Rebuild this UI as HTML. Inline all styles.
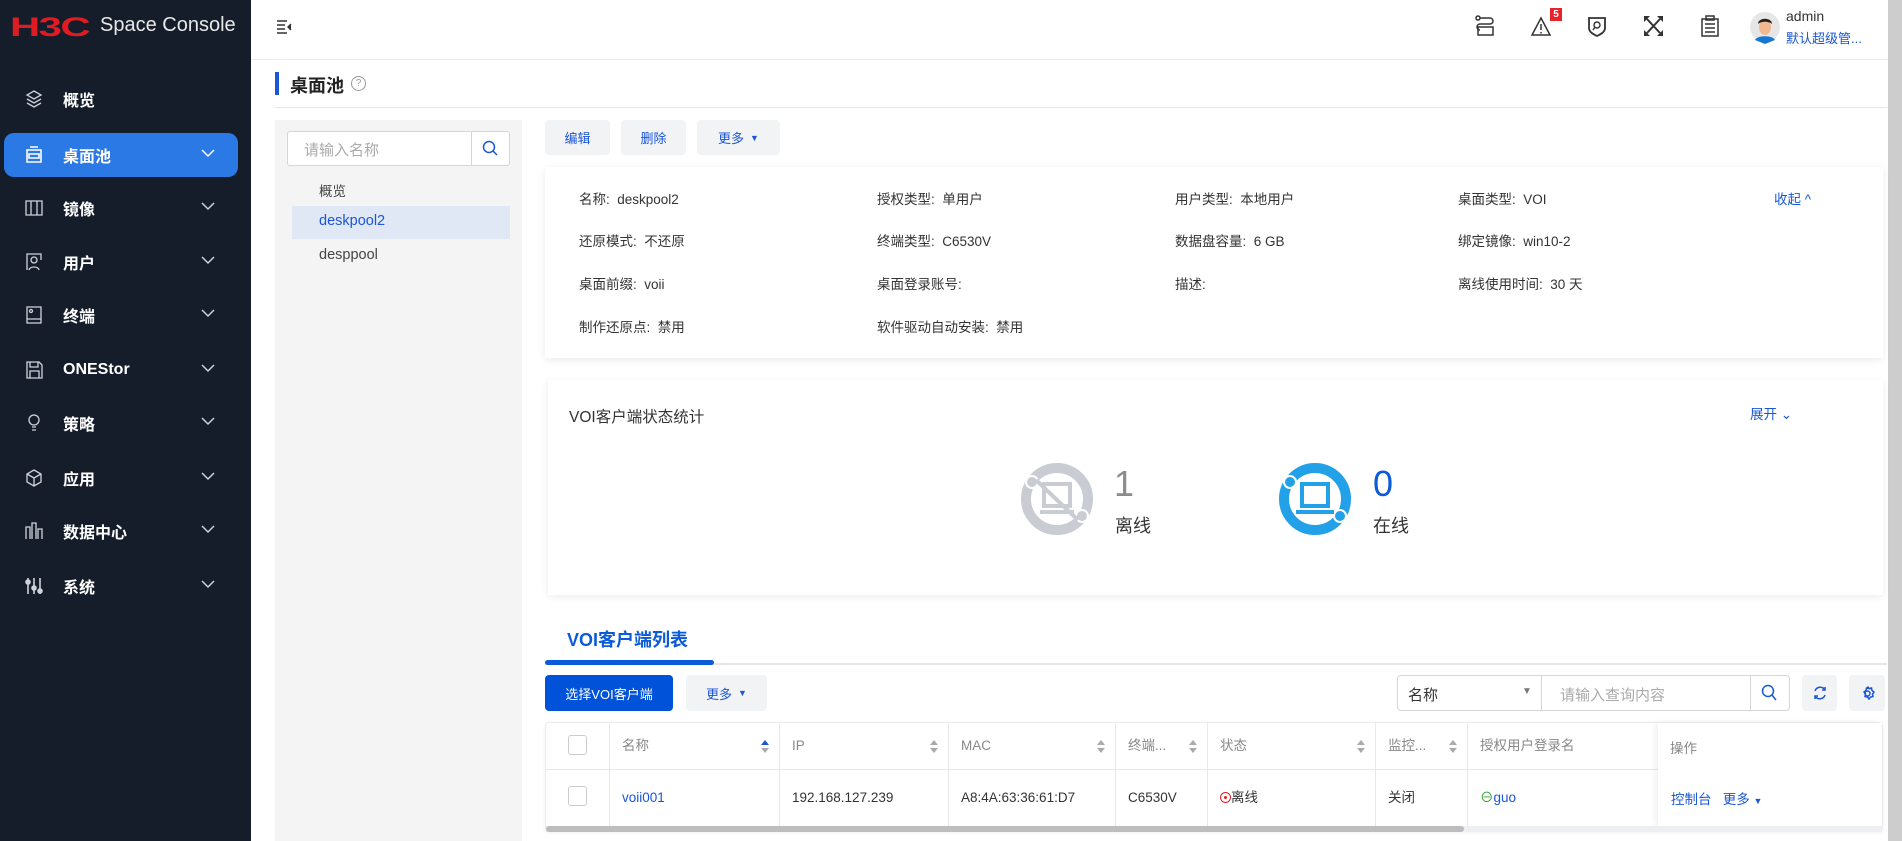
<!DOCTYPE html>
<html><head><meta charset="utf-8"><style>
*{margin:0;padding:0;box-sizing:border-box}
body{width:1902px;height:841px;overflow:hidden;background:#fff;font-family:"Liberation Sans","Noto Sans CJK SC",sans-serif;color:#333;position:relative;font-size:14px}
.a{position:absolute}
#side{left:0;top:0;width:251px;height:841px;background:#151d2b}
.mi{position:absolute;left:4px;width:234px;height:44px;color:#fff;font-size:16px;font-weight:bold;display:flex;align-items:center}
.mi .ic{position:absolute;left:20px;top:12px;width:20px;height:20px}
.mi .t{position:absolute;left:59px}
.mi .ch{position:absolute;left:197px;top:15px;width:14px;height:10px}
.mi.act{background:#2a79e4;border-radius:10px}
.btn{position:absolute;background:#f2f3f5;color:#1a56d6;border-radius:4px;font-size:13px;display:flex;align-items:center;justify-content:center}
.card{position:absolute;background:#fff;box-shadow:0 2px 8px rgba(0,0,0,.08)}
.lbl{position:absolute;font-size:13.5px;color:#333;white-space:nowrap;transform:translateY(-50%)}
.th{position:absolute;top:722px;height:48px;line-height:48px;color:#888;font-size:13.5px;padding-left:12px;border-right:1px solid #e8e8e8}
.td{position:absolute;top:770px;height:56px;line-height:56px;font-size:13.5px;color:#333;padding-left:12px;border-right:1px solid #e8e8e8}
.sort{position:absolute;right:10px;top:18px;width:8px;height:13px}
</style></head><body>
<div id="side" class="a">
  <div class="a" style="left:10px;top:12px;font-size:27px;font-weight:900;color:#e01b22;letter-spacing:-1px;font-family:'Liberation Sans',sans-serif;transform:scaleX(1.55);transform-origin:left">H3C</div>
  <div class="a" style="left:100px;top:14px;font-size:20px;color:#e8e8e8">Space Console</div>
  <div class="mi" style="top:77px"><svg class="ic" viewBox="0 0 20 20" fill="none" stroke="#cfd3da" stroke-width="1.3"><path d="M10 2 17 6 10 10 3 6Z"/><path d="M3 10l7 4 7-4M3 14l7 4 7-4"/></svg><span class="t">概览</span></div>
  <div class="mi act" style="top:133px"><svg class="ic" viewBox="0 0 20 20" fill="none" stroke="#fff" stroke-width="1.6"><path d="M6 2h8M3 5h14v12H3z"/><path d="M5 9h10v4H5z"/></svg><span class="t">桌面池</span><svg class="ch" viewBox="0 0 14 10" fill="none" stroke="#fff" stroke-width="1.5"><path d="M1 2l6 6 6-6"/></svg></div>
  <div class="mi" style="top:186px"><svg class="ic" viewBox="0 0 20 20" fill="none" stroke="#cfd3da" stroke-width="1.3"><path d="M2 3h16v14H2zM7 3v14M13 3v14"/></svg><span class="t">镜像</span><svg class="ch" viewBox="0 0 14 10" fill="none" stroke="#cfd3da" stroke-width="1.5"><path d="M1 2l6 6 6-6"/></svg></div>
  <div class="mi" style="top:240px"><svg class="ic" viewBox="0 0 20 20" fill="none" stroke="#cfd3da" stroke-width="1.3"><path d="M3 18V2h14v6"/><circle cx="10" cy="8" r="3"/><path d="M5 18c1-4 9-4 10 0"/></svg><span class="t">用户</span><svg class="ch" viewBox="0 0 14 10" fill="none" stroke="#cfd3da" stroke-width="1.5"><path d="M1 2l6 6 6-6"/></svg></div>
  <div class="mi" style="top:293px"><svg class="ic" viewBox="0 0 20 20" fill="none" stroke="#cfd3da" stroke-width="1.3"><path d="M3 2h14v16H3zM3 14h14"/><circle cx="7" cy="6" r="1.5"/></svg><span class="t">终端</span><svg class="ch" viewBox="0 0 14 10" fill="none" stroke="#cfd3da" stroke-width="1.5"><path d="M1 2l6 6 6-6"/></svg></div>
  <div class="mi" style="top:348px"><svg class="ic" viewBox="0 0 20 20" fill="none" stroke="#cfd3da" stroke-width="1.3"><path d="M3 2h12l3 3v13H3zM6 2v5h8V2M6 11h9v7H6z"/></svg><span class="t">ONEStor</span><svg class="ch" viewBox="0 0 14 10" fill="none" stroke="#cfd3da" stroke-width="1.5"><path d="M1 2l6 6 6-6"/></svg></div>
  <div class="mi" style="top:401px"><svg class="ic" viewBox="0 0 20 20" fill="none" stroke="#cfd3da" stroke-width="1.3"><circle cx="10" cy="7" r="5"/><path d="M8 14h4M8 17h4"/></svg><span class="t">策略</span><svg class="ch" viewBox="0 0 14 10" fill="none" stroke="#cfd3da" stroke-width="1.5"><path d="M1 2l6 6 6-6"/></svg></div>
  <div class="mi" style="top:456px"><svg class="ic" viewBox="0 0 20 20" fill="none" stroke="#cfd3da" stroke-width="1.3"><path d="M10 2l7 4v8l-7 4-7-4V6zM3 6l7 4 7-4M10 10v8"/></svg><span class="t">应用</span><svg class="ch" viewBox="0 0 14 10" fill="none" stroke="#cfd3da" stroke-width="1.5"><path d="M1 2l6 6 6-6"/></svg></div>
  <div class="mi" style="top:509px"><svg class="ic" viewBox="0 0 20 20" fill="none" stroke="#cfd3da" stroke-width="1.3"><path d="M2 18V6h4v12M8 18V2h4v16M14 18V8h4v10"/></svg><span class="t">数据中心</span><svg class="ch" viewBox="0 0 14 10" fill="none" stroke="#cfd3da" stroke-width="1.5"><path d="M1 2l6 6 6-6"/></svg></div>
  <div class="mi" style="top:564px"><svg class="ic" viewBox="0 0 20 20" fill="none" stroke="#cfd3da" stroke-width="1.6"><path d="M4 2v16M10 2v16M16 2v16"/><circle cx="4" cy="6" r="2" fill="#cfd3da"/><circle cx="10" cy="12" r="2" fill="#cfd3da"/><circle cx="16" cy="15" r="2" fill="#cfd3da"/></svg><span class="t">系统</span><svg class="ch" viewBox="0 0 14 10" fill="none" stroke="#cfd3da" stroke-width="1.5"><path d="M1 2l6 6 6-6"/></svg></div>
</div>
<div class="a" style="left:251px;top:59px;width:1637px;height:1px;background:#ebebeb"></div>
<svg class="a" style="left:276px;top:19px" width="16" height="15" viewBox="0 0 16 15" fill="none" stroke="#333" stroke-width="1.4"><path d="M1 2h10M1 6h8M1 10h8M1 14h10"/><path d="M15 5l-3 3 3 3" fill="#333"/></svg>
<svg class="a" style="left:1475px;top:15px" width="20" height="22" viewBox="0 0 20 22" fill="none" stroke="#333" stroke-width="1.5"><circle cx="3" cy="3" r="2"/><path d="M5 3h10a3 3 0 010 6H5a3 3 0 000 6"/><rect x="3" y="12" width="15" height="8"/></svg>
<svg class="a" style="left:1530px;top:16px" width="22" height="20" viewBox="0 0 22 20" fill="none" stroke="#333" stroke-width="1.5"><path d="M11 2 20 19H2Z"/><path d="M11 8v6M11 16v1.5"/></svg>
<div class="a" style="left:1550px;top:8px;width:12px;height:13px;background:#e8232b;color:#fff;font-size:10px;font-weight:bold;text-align:center;line-height:13px">5</div>
<svg class="a" style="left:1587px;top:15px" width="20" height="22" viewBox="0 0 20 22" fill="none" stroke="#333" stroke-width="1.8"><path d="M2 3h16v10c0 4-4 6-8 8-4-2-8-4-8-8z"/><circle cx="10" cy="10" r="3" stroke-width="1.4"/><path d="M8 12l-2 3" stroke-width="1.4"/></svg>
<svg class="a" style="left:1644px;top:16px" width="19" height="20" viewBox="0 0 19 20" fill="#333"><path d="M0 0h6L0 6zM19 0h-6l6 6zM0 20h6L0 14zM19 20h-6l6-6z"/><path d="M3 3l13 14M16 3 3 17" stroke="#333" stroke-width="2"/></svg>
<svg class="a" style="left:1700px;top:15px" width="20" height="22" viewBox="0 0 20 22" fill="none" stroke="#333" stroke-width="1.5"><path d="M2 4h16v17H2zM6 1h8v4H6z"/><path d="M5 9h10M5 13h10M5 17h10"/></svg>
<svg class="a" style="left:1750px;top:12px" width="30" height="32" viewBox="0 0 30 32"><circle cx="15" cy="15" r="15" fill="#e6e6e6"/><path d="M5 28c2-5 18-5 20 0l-10 4z" fill="#1677d2"/><ellipse cx="15" cy="15" rx="6" ry="8" fill="#f0b98f"/><path d="M8 12c0-7 14-7 14 0-3-3-11-3-14 0z" fill="#222"/></svg>
<div class="a" style="left:1786px;top:8px;font-size:14px;color:#333">admin</div>
<div class="a" style="left:1786px;top:28px;font-size:13px;color:#1a56d6">默认超级管...</div>
<div class="a" style="left:1888px;top:0;width:14px;height:841px;background:#cdcdcd"></div>
<div class="a" style="left:275px;top:72px;width:4px;height:23px;background:#1a56d6"></div>
<div class="a" style="left:290px;top:72px;font-size:18px;font-weight:bold;color:#222">桌面池</div>
<div class="a" style="left:351px;top:76px;width:15px;height:15px;border:1px solid #999;border-radius:50%;font-size:10px;color:#999;text-align:center;line-height:13px">?</div>
<div class="a" style="left:275px;top:107px;width:1612px;height:1px;background:#e6e6e6"></div>
<div class="a" style="left:275px;top:120px;width:247px;height:721px;background:#f4f4f5"></div>
<div class="a" style="left:287px;top:131px;width:223px;height:35px;background:#fff;border:1px solid #d6d6d6;border-radius:3px"></div>
<div class="a" style="left:471px;top:132px;width:1px;height:33px;background:#d6d6d6"></div>
<div class="a" style="left:304px;top:139px;font-size:15px;color:#aaa">请输入名称</div>
<svg class="a" style="left:482px;top:140px" width="17" height="17" viewBox="0 0 17 17" fill="none" stroke="#1a56d6" stroke-width="1.5"><circle cx="7" cy="7" r="5.5"/><path d="M11 11l4 4"/></svg>
<div class="a" style="left:319px;top:180px;font-size:13.5px;color:#444">概览</div>
<div class="a" style="left:292px;top:206px;width:218px;height:33px;background:#e0e8f5"></div>
<div class="a" style="left:319px;top:213px;font-size:14.5px;color:#1a56d6">deskpool2</div>
<div class="a" style="left:319px;top:247px;font-size:14.5px;color:#444">desppool</div>
<div class="btn" style="left:545px;top:120px;width:65px;height:35px">编辑</div>
<div class="btn" style="left:621px;top:120px;width:65px;height:35px">删除</div>
<div class="btn" style="left:697px;top:120px;width:83px;height:35px">更多 <span style="font-size:9px;margin-left:6px">▼</span></div>
<div class="card" style="left:545px;top:167px;width:1338px;height:191px"></div>
<div class="lbl" style="left:579px;top:198px">名称:&nbsp; deskpool2</div>
<div class="lbl" style="left:877px;top:198px">授权类型:&nbsp; 单用户</div>
<div class="lbl" style="left:1175px;top:198px">用户类型:&nbsp; 本地用户</div>
<div class="lbl" style="left:1458px;top:198px">桌面类型:&nbsp; VOI</div>
<div class="lbl" style="left:1774px;top:198px;color:#1a56d6">收起 ^</div>
<div class="lbl" style="left:579px;top:240px">还原模式:&nbsp; 不还原</div>
<div class="lbl" style="left:877px;top:240px">终端类型:&nbsp; C6530V</div>
<div class="lbl" style="left:1175px;top:240px">数据盘容量:&nbsp; 6 GB</div>
<div class="lbl" style="left:1458px;top:240px">绑定镜像:&nbsp; win10-2</div>
<div class="lbl" style="left:579px;top:283px">桌面前缀:&nbsp; voii</div>
<div class="lbl" style="left:877px;top:283px">桌面登录账号:</div>
<div class="lbl" style="left:1175px;top:283px">描述:</div>
<div class="lbl" style="left:1458px;top:283px">离线使用时间:&nbsp; 30 天</div>
<div class="lbl" style="left:579px;top:326px">制作还原点:&nbsp; 禁用</div>
<div class="lbl" style="left:877px;top:326px">软件驱动自动安装:&nbsp; 禁用</div>
<div class="card" style="left:548px;top:380px;width:1335px;height:215px"></div>
<div class="a" style="left:569px;top:405px;font-size:15.5px;color:#333">VOI客户端状态统计</div>
<div class="a" style="left:1750px;top:403px;font-size:13.5px;color:#1a56d6">展开 ⌄</div>
<svg class="a" style="left:1018px;top:460px" width="78" height="78" viewBox="0 0 78 78"><circle cx="39" cy="39" r="31" fill="none" stroke="#c9ccd3" stroke-width="10"/><circle cx="14" cy="22" r="6" fill="#c9ccd3" stroke="#fff" stroke-width="2"/><circle cx="64" cy="56" r="6" fill="#c9ccd3" stroke="#fff" stroke-width="2"/><rect x="26" y="24" width="26" height="22" fill="none" stroke="#c9ccd3" stroke-width="4"/><path d="M22 52h34M18 20l42 40" stroke="#c9ccd3" stroke-width="4"/></svg>
<svg class="a" style="left:1276px;top:460px" width="78" height="78" viewBox="0 0 78 78"><circle cx="39" cy="39" r="31" fill="none" stroke="#22a0e8" stroke-width="10"/><circle cx="14" cy="22" r="6" fill="#22a0e8" stroke="#fff" stroke-width="2"/><circle cx="64" cy="56" r="6" fill="#22a0e8" stroke="#fff" stroke-width="2"/><rect x="26" y="24" width="26" height="22" fill="none" stroke="#22a0e8" stroke-width="4"/><path d="M20 52h38" stroke="#22a0e8" stroke-width="4"/></svg>
<div class="a" style="left:1114px;top:463px;font-size:36px;color:#8c8c8c">1</div>
<div class="a" style="left:1115px;top:512px;font-size:18px;color:#333">离线</div>
<div class="a" style="left:1373px;top:463px;font-size:36px;color:#0a5bd8">0</div>
<div class="a" style="left:1373px;top:512px;font-size:18px;color:#333">在线</div>
<div class="a" style="left:567px;top:626px;font-size:18px;font-weight:bold;color:#0a5bd8">VOI客户端列表</div>
<div class="a" style="left:545px;top:663px;width:1342px;height:2px;background:#e6e6e6"></div>
<div class="a" style="left:545px;top:660px;width:169px;height:5px;background:#0a5bd8;border-radius:3px"></div>
<div class="btn" style="left:545px;top:675px;width:128px;height:36px;background:#0052d9;color:#fff">选择VOI客户端</div>
<div class="btn" style="left:686px;top:675px;width:81px;height:36px">更多 <span style="font-size:9px;margin-left:6px">▼</span></div>
<div class="a" style="left:1397px;top:675px;width:393px;height:36px;border:1px solid #d6d6d6;border-radius:4px;background:#fff"></div>
<div class="a" style="left:1541px;top:676px;width:1px;height:34px;background:#d6d6d6"></div>
<div class="a" style="left:1750px;top:676px;width:1px;height:34px;background:#d6d6d6"></div>
<div class="a" style="left:1408px;top:684px;font-size:15px;color:#333">名称</div>
<div class="a" style="left:1522px;top:686px;font-size:10px;color:#777">▼</div>
<div class="a" style="left:1560px;top:684px;font-size:15px;color:#aaa">请输入查询内容</div>
<svg class="a" style="left:1761px;top:684px" width="17" height="18" viewBox="0 0 17 18" fill="none" stroke="#1a56d6" stroke-width="1.5"><circle cx="7" cy="7" r="5.5"/><path d="M11 11l4 5"/></svg>
<div class="btn" style="left:1802px;top:675px;width:35px;height:36px"><svg width="16" height="16" viewBox="0 0 16 16" fill="none" stroke="#1a56d6" stroke-width="1.5"><path d="M3 6a5.5 5.5 0 0110-1M13 10a5.5 5.5 0 01-10 1"/><path d="M13 2v3h-3M3 14v-3h3"/></svg></div>
<div class="btn" style="left:1849px;top:675px;width:36px;height:36px"><svg width="17" height="17" viewBox="0 0 17 17" fill="none" stroke="#1a56d6" stroke-width="1.5"><circle cx="8.5" cy="8.5" r="2.5"/><path d="M8.5 1.5l1.5 2 2.5-.5.5 2.5 2 1.5-1.5 2 .5 2.5-2.5.5-1.5 2-1.5-2-2.5-.5.5-2.5-1.5-2 2-1.5.5-2.5 2.5.5z"/></svg></div>
<div class="a" style="left:545px;top:722px;width:1338px;height:110px;border:1px solid #ececec;border-radius:4px;box-shadow:0 1px 4px rgba(0,0,0,.06)"></div>
<div class="a" style="left:545px;top:769px;width:1113px;height:1px;background:#e8e8e8"></div>
<div class="th" style="left:545px;width:65px"></div>
<div class="a" style="left:568px;top:735px;width:19px;height:20px;border:1px solid #ccc;border-radius:3px;background:#fff"></div>
<div class="th" style="left:610px;width:170px">名称<svg class="sort" viewBox="0 0 8 13"><path d="M4 0 8 5H0z" fill="#1a56d6"/><path d="M4 13 8 8H0z" fill="#aaa"/></svg></div>
<div class="th" style="left:780px;width:169px">IP<svg class="sort" viewBox="0 0 8 13"><path d="M4 0 8 5H0zM4 13 8 8H0z" fill="#aaa"/></svg></div>
<div class="th" style="left:949px;width:167px">MAC<svg class="sort" viewBox="0 0 8 13"><path d="M4 0 8 5H0zM4 13 8 8H0z" fill="#aaa"/></svg></div>
<div class="th" style="left:1116px;width:92px">终端...<svg class="sort" viewBox="0 0 8 13"><path d="M4 0 8 5H0zM4 13 8 8H0z" fill="#aaa"/></svg></div>
<div class="th" style="left:1208px;width:168px">状态<svg class="sort" viewBox="0 0 8 13"><path d="M4 0 8 5H0zM4 13 8 8H0z" fill="#aaa"/></svg></div>
<div class="th" style="left:1376px;width:92px">监控...<svg class="sort" viewBox="0 0 8 13"><path d="M4 0 8 5H0zM4 13 8 8H0z" fill="#aaa"/></svg></div>
<div class="th" style="left:1468px;width:190px;border-right:none">授权用户登录名</div>
<div class="td" style="left:545px;width:65px"></div>
<div class="a" style="left:568px;top:786px;width:19px;height:20px;border:1px solid #ccc;border-radius:3px;background:#fff"></div>
<div class="td" style="left:610px;width:170px;color:#1a56d6">voii001</div>
<div class="td" style="left:780px;width:169px">192.168.127.239</div>
<div class="td" style="left:949px;width:167px">A8:4A:63:36:61:D7</div>
<div class="td" style="left:1116px;width:92px">C6530V</div>
<div class="td" style="left:1208px;width:168px"><span style="display:inline-block;width:11px;height:11px;border:1.5px solid #e02020;border-radius:50%;vertical-align:-1px;position:relative"><span style="position:absolute;left:2.5px;top:2.5px;width:3px;height:3px;background:#e02020;border-radius:50%"></span></span>离线</div>
<div class="td" style="left:1376px;width:92px">关闭</div>
<div class="td" style="left:1468px;width:190px;border-right:none"><span style="color:#2a9d2a">⊖</span><span style="color:#1a56d6">guo</span></div>
<div class="a" style="left:1658px;top:723px;width:224px;height:103px;background:#fff;box-shadow:-3px 0 6px rgba(0,0,0,.06)"></div>
<div class="a" style="left:1670px;top:737px;font-size:13.5px;color:#888">操作</div>
<div class="a" style="left:1671px;top:788px;font-size:13.5px;color:#1a56d6">控制台&nbsp;&nbsp; 更多 <span style="font-size:9px">▼</span></div>
<div class="a" style="left:546px;top:826px;width:1336px;height:6px;background:#eeeff2"></div>
<div class="a" style="left:546px;top:826px;width:918px;height:6px;background:#bdbdbd;border-radius:3px"></div>
</body></html>
